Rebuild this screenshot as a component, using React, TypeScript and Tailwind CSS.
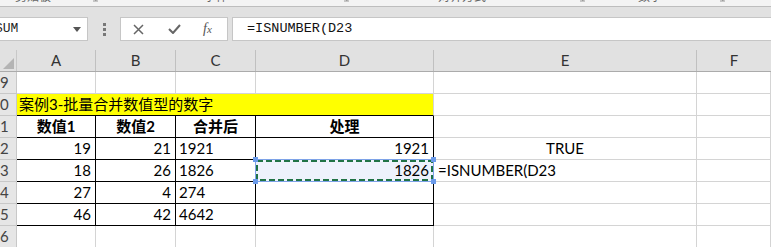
import React from 'react';

const GRID = 'border-[#d4d4d4]';
const BLACK = 'border-black';

const cols = [
  { key: 'A', w: 'w-[79px]' },
  { key: 'B', w: 'w-[80px]' },
  { key: 'C', w: 'w-[80px]' },
  { key: 'D', w: 'w-[178px]' },
  { key: 'E', w: 'w-[263px]' },
];

type CellProps = {
  w?: string;
  align?: 'left' | 'right' | 'center';
  line?: string;
  bold?: boolean;
  bg?: string;
  children?: React.ReactNode;
  className?: string;
};

function Cell({ w = '', align = 'left', line = GRID, bold, bg = '', children, className = '' }: CellProps) {
  const justify = align === 'right' ? 'justify-end pr-[4px]' : align === 'center' ? 'justify-center' : 'justify-start pl-[3px]';
  return (
    <div
      className={`${w} h-full shrink-0 flex items-center border-r border-b ${line} ${justify} ${bg} ${bold ? 'font-bold' : ''} whitespace-nowrap ${className}`}
    >
      {children}
    </div>
  );
}

function RowHead({ n }: { n: number }) {
  return (
    <div className="w-[17px] h-full shrink-0 overflow-hidden border-r border-b border-[#c8c8c8] bg-[#e6e6e6] text-[#444]">
      <div className="w-[32px] -ml-[16px] h-full flex items-center justify-center">{n}</div>
    </div>
  );
}

function Launcher() {
  return (
    <svg width="9" height="9" viewBox="0 0 9 9" className="-mt-[6px] shrink-0">
      <path d="M1 1h7v7" fill="none" stroke="#999" />
      <path d="M3 3l4 4M7 4v3H4" fill="none" stroke="#999" />
    </svg>
  );
}

function Ribbon() {
  return (
    <div className="h-[7px] bg-[#f3f3f3] border-b border-[#bdbdbd] flex items-start overflow-hidden text-[12px] leading-[12px] text-[#666]">
      <span className="ml-[15px] -mt-[9px] shrink-0">剪贴板</span>
      <span className="ml-[38px]"><Launcher /></span>
      <span className="ml-[106px] -mt-[9px] shrink-0">字体</span>
      <span className="ml-[112px]"><Launcher /></span>
      <span className="ml-[89px] -mt-[9px] shrink-0">对齐方式</span>
      <span className="ml-[90px]"><Launcher /></span>
      <span className="ml-[53px] -mt-[9px] shrink-0">数字</span>
      <span className="ml-[54px]"><Launcher /></span>
    </div>
  );
}

function FormulaBar() {
  return (
    <div className="h-[43px] bg-[#e1e1e1] pt-[10px] flex items-start">
      <div className="w-[88px] h-[24px] bg-white border border-l-0 border-[#c6c6c6] flex items-center overflow-hidden">
        <span className="-ml-[5px] font-['Liberation_Mono',monospace] text-[13px] text-[#222] flex-1">SUM</span>
        <svg width="8" height="5" viewBox="0 0 8 5" className="mr-[6px]">
          <path d="M0 0h8L4 5z" fill="#555" />
        </svg>
      </div>
      <div className="w-[32px] h-[24px] flex items-center justify-center">
        <svg width="3" height="13" viewBox="0 0 3 13">
          <rect x="0" y="0" width="3" height="3" fill="#777" />
          <rect x="0" y="5" width="3" height="3" fill="#777" />
          <rect x="0" y="10" width="3" height="3" fill="#777" />
        </svg>
      </div>
      <div className="w-[108px] h-[24px] bg-white border border-[#c6c6c6] flex items-center">
        <svg width="11" height="11" viewBox="0 0 11 11" className="ml-[12px]">
          <path d="M1 1l9 9M10 1l-9 9" stroke="#666" strokeWidth="1.5" />
        </svg>
        <svg width="13" height="10" viewBox="0 0 13 10" className="ml-[24px]">
          <path d="M1 5l4 4 7-8" fill="none" stroke="#666" strokeWidth="2" />
        </svg>
        <span className="ml-[22px] font-['Liberation_Serif',serif] italic text-[14px] text-[#555] leading-none">
          f<span className="text-[11px]">x</span>
        </span>
      </div>
      <div className="flex-1 ml-[4px] h-[24px] bg-white border border-r-0 border-[#c6c6c6] flex items-center">
        <span className="ml-[14px] font-['Liberation_Mono',monospace] text-[13.5px] text-[#111]">=ISNUMBER(D23</span>
      </div>
    </div>
  );
}

function ColHeaders() {
  return (
    <div className="h-[22px] flex bg-[#e1e1e1] border-b border-[#ababab] text-[#333]">
      <div className="w-[17px] h-full shrink-0 border-r border-[#c8c8c8] flex items-end justify-end p-[2px]">
        <svg width="11" height="11" viewBox="0 0 11 11">
          <path d="M11 0v11H0z" fill="#b4b4b4" />
        </svg>
      </div>
      {cols.map((c) => (
        <div key={c.key} className={`${c.w} h-full shrink-0 border-r border-[#c0c0c0] flex items-center justify-center`}>
          {c.key}
        </div>
      ))}
      <div className="flex-1 flex items-center justify-center">F</div>
    </div>
  );
}

function Selection() {
  return (
    <div className="absolute -left-px -top-px w-[179px] h-[23px] border border-[#7ea3e8] pointer-events-none">
      <svg className="absolute inset-0" width="177" height="21">
        <rect x="1" y="1" width="175" height="19" fill="none" stroke="#217346" strokeWidth="2" strokeDasharray="6 3" />
      </svg>
      <div className="absolute -left-[3px] -top-[3px] w-[5px] h-[5px] bg-[#6b9bea]" />
      <div className="absolute -right-[3px] -top-[3px] w-[5px] h-[5px] bg-[#6b9bea]" />
      <div className="absolute -left-[3px] -bottom-[3px] w-[5px] h-[5px] bg-[#6b9bea]" />
      <div className="absolute -right-[3px] -bottom-[3px] w-[5px] h-[5px] bg-[#6b9bea]" />
    </div>
  );
}

const data = [
  { n: 22, a: 19, b: 21, c: '1921', d: '1921', e: 'TRUE' },
  { n: 23, a: 18, b: 26, c: '1826', d: '1826', e: '' },
  { n: 24, a: 27, b: 4, c: '274', d: '', e: '' },
  { n: 25, a: 46, b: 42, c: '4642', d: '', e: '' },
];

export default function App() {
  return (
    <div className="w-[771px] h-[247px] overflow-hidden bg-white font-['Lato','Noto_Sans_CJK_SC',sans-serif] text-[15px] text-black">
      <Ribbon />
      <FormulaBar />
      <ColHeaders />

      <div className="h-[22px] flex">
        <RowHead n={19} />
        <Cell w="w-[79px]" />
        <Cell w="w-[80px]" />
        <Cell w="w-[80px]" />
        <Cell w="w-[178px]" />
        <Cell w="w-[263px]" />
        <Cell w="flex-1" />
      </div>

      <div className="h-[22px] flex">
        <RowHead n={20} />
        <div className="w-[417px] h-full shrink-0 flex items-center pl-[2px] bg-[#ffff00] border-r border-r-[#d4d4d4] border-b border-b-black whitespace-nowrap">
          案例3-批量合并数值型的数字
        </div>
        <Cell w="w-[263px]" />
        <Cell w="flex-1" />
      </div>

      <div className="h-[22px] flex">
        <RowHead n={21} />
        <Cell w="w-[79px]" line={BLACK} align="center" bold>数值1</Cell>
        <Cell w="w-[80px]" line={BLACK} align="center" bold>数值2</Cell>
        <Cell w="w-[80px]" line={BLACK} align="center" bold>合并后</Cell>
        <Cell w="w-[178px]" line={BLACK} align="center" bold>处理</Cell>
        <Cell w="w-[263px]" />
        <Cell w="flex-1" />
      </div>

      {data.map((r) => (
        <div key={r.n} className="h-[22px] flex">
          <RowHead n={r.n} />
          <Cell w="w-[79px]" line={BLACK} align="right">{r.a}</Cell>
          <Cell w="w-[80px]" line={BLACK} align="right">{r.b}</Cell>
          <Cell w="w-[80px]" line={BLACK}>{r.c}</Cell>
          {r.n === 23 ? (
            <Cell w="w-[178px]" line={BLACK} align="right" bg="bg-[#eef2fc]" className="relative">
              {r.d}
              <Selection />
            </Cell>
          ) : (
            <Cell w="w-[178px]" line={BLACK} align="right">{r.d}</Cell>
          )}
          {r.n === 23 ? (
            <Cell w="w-[263px]" className="!pl-[4px] overflow-visible">=ISNUMBER(D23</Cell>
          ) : (
            <Cell w="w-[263px]" align={r.e ? 'center' : 'left'}>{r.e}</Cell>
          )}
          <Cell w="flex-1" />
        </div>
      ))}

      <div className="h-[22px] flex">
        <RowHead n={26} />
        <Cell w="w-[79px]" />
        <Cell w="w-[80px]" />
        <Cell w="w-[80px]" />
        <Cell w="w-[178px]" />
        <Cell w="w-[263px]" />
        <Cell w="flex-1" />
      </div>
    </div>
  );
}
